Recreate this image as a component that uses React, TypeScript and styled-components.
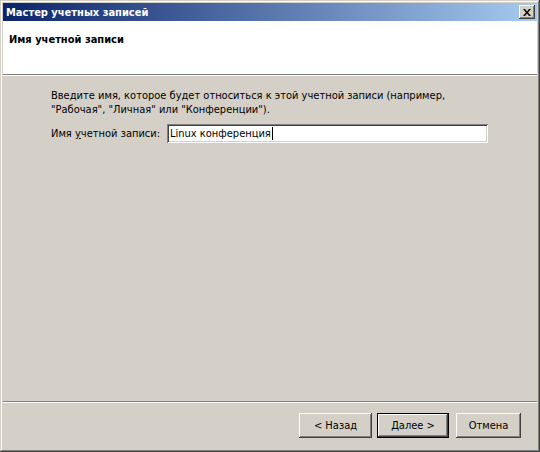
import React from "react";
import styled, { createGlobalStyle } from "styled-components";

const GlobalStyle = createGlobalStyle`
  html, body {
    margin: 0;
    padding: 0;
    background: #d4d0c8;
  }
  * {
    box-sizing: border-box;
  }
`;

const FONT = `"DejaVu Sans Condensed", "DejaVu Sans", "Liberation Sans", sans-serif`;

function App() {
  return (
    <>
      <GlobalStyle />
      <Window>
        <TitleBar>
          <Title>Мастер учетных записей</Title>
          <CloseButton aria-label="Закрыть">
            <svg width="8" height="7" viewBox="0 0 8 7">
              <path
                d="M0 0h2l2 2.5L6 0h2L5 3.5 8 7H6L4 4.5 2 7H0l3-3.5z"
                fill="#000"
              />
            </svg>
          </CloseButton>
        </TitleBar>

        <Header>
          <HeaderTitle>Имя учетной записи</HeaderTitle>
        </Header>
        <Separator />

        <Body>
          <Hint>
            Введите имя, которое будет относиться к этой учетной записи (например,
            <br />
            "Рабочая", "Личная" или "Конференции").
          </Hint>
          <FieldRow>
            <Label>
              Имя <u>у</u>четной записи:
            </Label>
            <TextBox>
              Linux конференция
              <Caret />
            </TextBox>
          </FieldRow>
        </Body>

        <Separator />
        <Footer>
          <ButtonGroup>
            <Button>&lt; Назад</Button>
            <Button $default>Далее &gt;</Button>
          </ButtonGroup>
          <Button $narrow>Отмена</Button>
        </Footer>
      </Window>
    </>
  );
}

const Window = styled.div`
  width: 540px;
  height: 452px;
  padding: 3px;
  display: flex;
  flex-direction: column;
  background: #d4d0c8;
  font-family: ${FONT};
  font-stretch: semi-condensed;
  font-size: 11px;
  color: #000;
  box-shadow: inset -1px -1px #404040, inset 1px 1px #d4d0c8,
    inset -2px -2px #808080, inset 2px 2px #fff;
`;

const TitleBar = styled.div`
  height: 18px;
  flex: none;
  display: flex;
  align-items: center;
  justify-content: space-between;
  padding: 0 2px 0 3px;
  background: linear-gradient(to right, #0a246a 0%, #a6caf0 100%);
`;

const Title = styled.span`
  color: #fff;
  font-weight: bold;
  font-size: 11px;
`;

const CloseButton = styled.div`
  width: 16px;
  height: 14px;
  display: flex;
  align-items: center;
  justify-content: center;
  background: #d4d0c8;
  box-shadow: inset -1px -1px #404040, inset 1px 1px #fff,
    inset -2px -2px #808080, inset 2px 2px #d4d0c8;
`;

const Header = styled.div`
  height: 53px;
  flex: none;
  background: #fff;
  padding: 12px 0 0 6px;
`;

const HeaderTitle = styled.div`
  font-weight: bold;
  font-size: 11px;
`;

const Separator = styled.div`
  height: 2px;
  flex: none;
  border-top: 1px solid #808080;
  border-bottom: 1px solid #fff;
`;

const Body = styled.div`
  flex: 1;
  padding: 13px 0 0 48px;
`;

const Hint = styled.p`
  margin: 0;
  line-height: 14px;
`;

const FieldRow = styled.div`
  display: flex;
  align-items: center;
  margin-top: 7px;
`;

const Label = styled.span`
  width: 116px;
  flex: none;
  white-space: nowrap;
  u {
    text-decoration: underline;
  }
`;

const TextBox = styled.div`
  width: 321px;
  height: 19px;
  display: flex;
  align-items: center;
  padding-left: 3px;
  white-space: nowrap;
  background: #fff;
  box-shadow: inset 1px 1px #808080, inset -1px -1px #fff,
    inset 2px 2px #404040, inset -2px -2px #d4d0c8;
`;

const Caret = styled.span`
  width: 1px;
  height: 13px;
  background: #000;
  margin-left: 1px;
`;

const Footer = styled.div`
  height: 46px;
  flex: none;
  display: flex;
  justify-content: flex-end;
  align-items: flex-start;
  padding: 10px 16px 0 0;
  gap: 7px;
`;

const ButtonGroup = styled.div`
  display: flex;
  gap: 5px;
`;

const Button = styled.div<{ $default?: boolean; $narrow?: boolean }>`
  width: ${(p) => (p.$narrow ? "65px" : p.$default ? "72px" : "73px")};
  height: 25px;
  display: flex;
  align-items: center;
  justify-content: center;
  background: #d4d0c8;
  box-shadow: ${(p) =>
    p.$default
      ? "inset 0 0 0 1px #000, inset -2px -2px #404040, inset 2px 2px #fff, inset -3px -3px #808080"
      : "inset -1px -1px #404040, inset 1px 1px #fff, inset -2px -2px #808080, inset 2px 2px #d4d0c8"};
`;

export default App;
